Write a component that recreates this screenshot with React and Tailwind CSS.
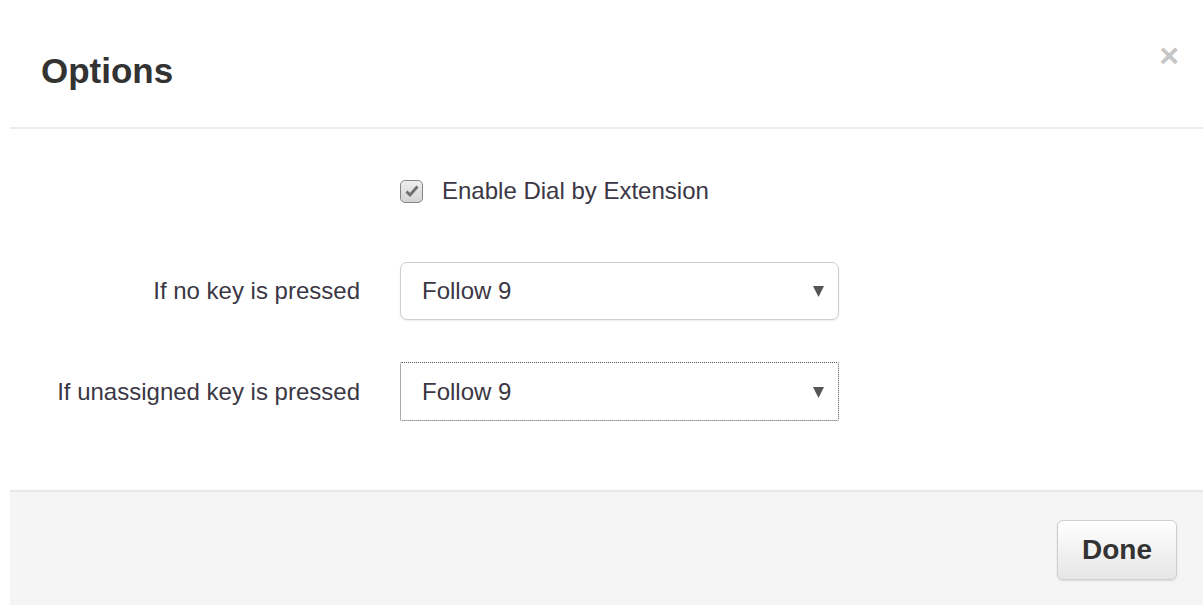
import { useState } from "react";

const font = { fontFamily: '"Liberation Sans", Arial, sans-serif' };

function Caret() {
  return (
    <svg width="11" height="12" viewBox="0 0 11 12" className="shrink-0">
      <path d="M0 1 L11 1 L5.5 12 Z" fill="#555" />
    </svg>
  );
}

function SelectBox({ value, focused }) {
  return (
    <div
      className={`flex items-center justify-between w-[439px] pl-[21px] pr-[14px] bg-white text-[24px] text-[#3b3744] ${
        focused
          ? "h-[59px] border border-dotted border-[#555] rounded-[2px]"
          : "h-[58px] border border-[#cfcfcf] rounded-[7px] shadow-[0_1px_2px_rgba(0,0,0,0.08)]"
      }`}
    >
      <span>{value}</span>
      <Caret />
    </div>
  );
}

export default function App() {
  const [enabled, setEnabled] = useState(true);

  const rows = [
    { label: "If no key is pressed", value: "Follow 9" },
    { label: "If unassigned key is pressed", value: "Follow 9", focused: true },
  ];

  return (
    <div className="w-[1203px] h-[605px] bg-white overflow-hidden" style={font}>
      <div className="ml-[10px] flex flex-col h-full">
        {/* Header */}
        <div className="h-[129px] border-b-2 border-[#ececec] flex items-start justify-between pl-[31px] pr-[24px]">
          <h1 className="mt-[53px] text-[35px] leading-none font-bold text-[#333]">
            Options
          </h1>
          <button className="mt-[38px] text-[34px] leading-none font-bold text-[#c6c6c6]">
            ×
          </button>
        </div>

        {/* Body */}
        <div className="flex-1 pt-[50px]">
          <div className="grid grid-cols-[350px_439px] gap-x-[40px] gap-y-[42px]">
            <div />
            <label
              className="flex items-center gap-[19px] h-[24px] text-[24px] leading-none text-[#3b3744] mb-[17px] cursor-pointer"
              onClick={() => setEnabled((v) => !v)}
            >
              <span className="w-[23px] h-[23px] rounded-[5px] border border-[#858585] bg-gradient-to-b from-[#ededed] to-[#d4d4d4] flex items-center justify-center">
                {enabled && (
                  <svg width="14" height="12" viewBox="0 0 14 12">
                    <path
                      d="M1.5 6.5 L5 10 L12.5 1.5"
                      stroke="#6e6e6e"
                      strokeWidth="2.8"
                      fill="none"
                    />
                  </svg>
                )}
              </span>
              Enable Dial by Extension
            </label>

            {rows.map((row) => (
              <div key={row.label} className="contents">
                <div className="flex items-center justify-end text-[24px] text-[#3b3744]">
                  {row.label}
                </div>
                <SelectBox value={row.value} focused={row.focused} />
              </div>
            ))}
          </div>
        </div>

        {/* Footer */}
        <div className="h-[115px] border-t-2 border-[#e8e8e8] bg-[#f5f5f5] flex items-start justify-end pt-[28px] pr-[26px]">
          <button className="w-[120px] h-[60px] rounded-[6px] border border-[#cfcfcf] bg-gradient-to-b from-white to-[#e6e6e6] shadow-[0_1px_2px_rgba(0,0,0,0.12)] text-[28px] font-bold text-[#333]">
            Done
          </button>
        </div>
      </div>
    </div>
  );
}
